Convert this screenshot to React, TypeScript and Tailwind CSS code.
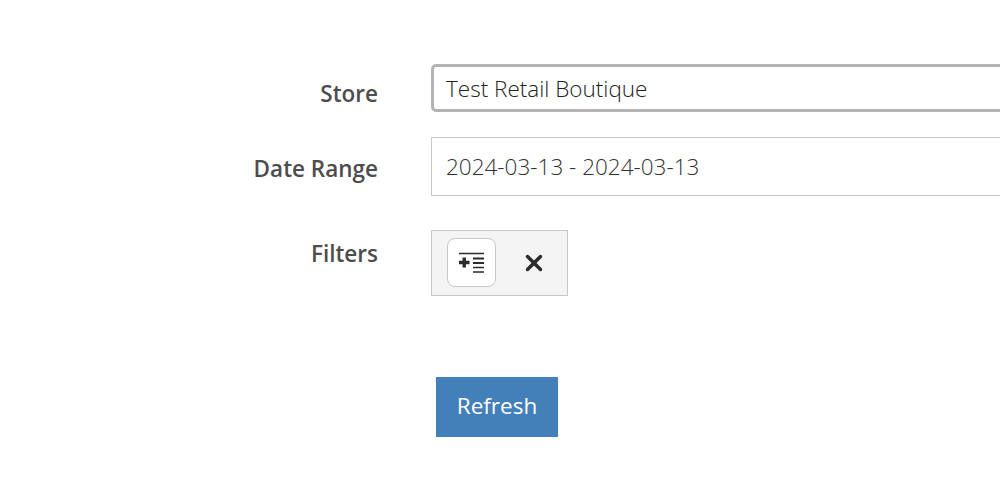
/**
 * Report filter form
 */

import { X } from 'lucide-react';

function FieldLabel({ children, className = '' }: { children: React.ReactNode; className?: string }) {
  return (
    <label className={`w-[378px] shrink-0 text-right text-[22.5px] leading-[30px] font-semibold text-[#4d4d4d] ${className}`}>
      {children}
    </label>
  );
}

function IndentIcon() {
  return (
    <svg width="26" height="22" viewBox="0 0 26 22" fill="none" className="text-[#2b2b2b]">
      <path d="M0 1.5H25" stroke="currentColor" strokeWidth="1.5" />
      <path d="M0 10.5H10.5M5.25 5.5V15.5" stroke="currentColor" strokeWidth="3.4" />
      <path d="M14 6.5H25M14 11H25" stroke="currentColor" strokeWidth="2.2" />
      <path d="M14 15.5H25M14 20H25" stroke="currentColor" strokeWidth="1.5" />
    </svg>
  );
}

export default function App() {
  return (
    <div className="w-[1000px] h-[497px] overflow-hidden bg-white pt-16 font-['Open_Sans',sans-serif]">
      {/* Store */}
      <div className="flex items-start gap-[53px]">
        <FieldLabel className="pt-[15px]">Store</FieldLabel>
        <div className="w-[600px] h-12 shrink-0 flex items-center pl-3 pt-[2px] rounded-[5px] border-[3px] border-[#b4b4b4] text-[22.5px] font-light text-[#222222] bg-white">
          Test Retail Boutique
        </div>
      </div>

      {/* Date range */}
      <div className="flex items-start gap-[53px] mt-[25px]">
        <FieldLabel className="pt-[17px]">Date Range</FieldLabel>
        <div className="w-[600px] h-[59px] shrink-0 flex items-center pl-[14px] border border-[#c8c8c8] text-[22.5px] font-light text-[#333333] bg-white">
          2024-03-13 - 2024-03-13
        </div>
      </div>

      {/* Filters */}
      <div className="flex items-start gap-[53px] mt-[34px]">
        <FieldLabel className="pt-[9px]">Filters</FieldLabel>
        <div className="w-[137px] h-[66px] shrink-0 flex items-center pl-[15px] gap-[13px] pb-[1px] border-[1.5px] border-[#c8c8c8] bg-[#f4f4f4]">
          <button className="w-[49px] h-[49px] flex items-center justify-center rounded-lg border-[1.5px] border-[#c8c8c8] bg-white">
            <IndentIcon />
          </button>
          <button className="w-[49px] h-[49px] flex items-center justify-center text-[#2b2b2b]">
            <X size={26} strokeWidth={3.2} />
          </button>
        </div>
      </div>

      {/* Actions */}
      <div className="pl-[436px] mt-[81px]">
        <button className="w-[122px] h-[60px] pb-[2px] bg-[#437fb8] text-white text-[22.5px]">Refresh</button>
      </div>
    </div>
  );
}
